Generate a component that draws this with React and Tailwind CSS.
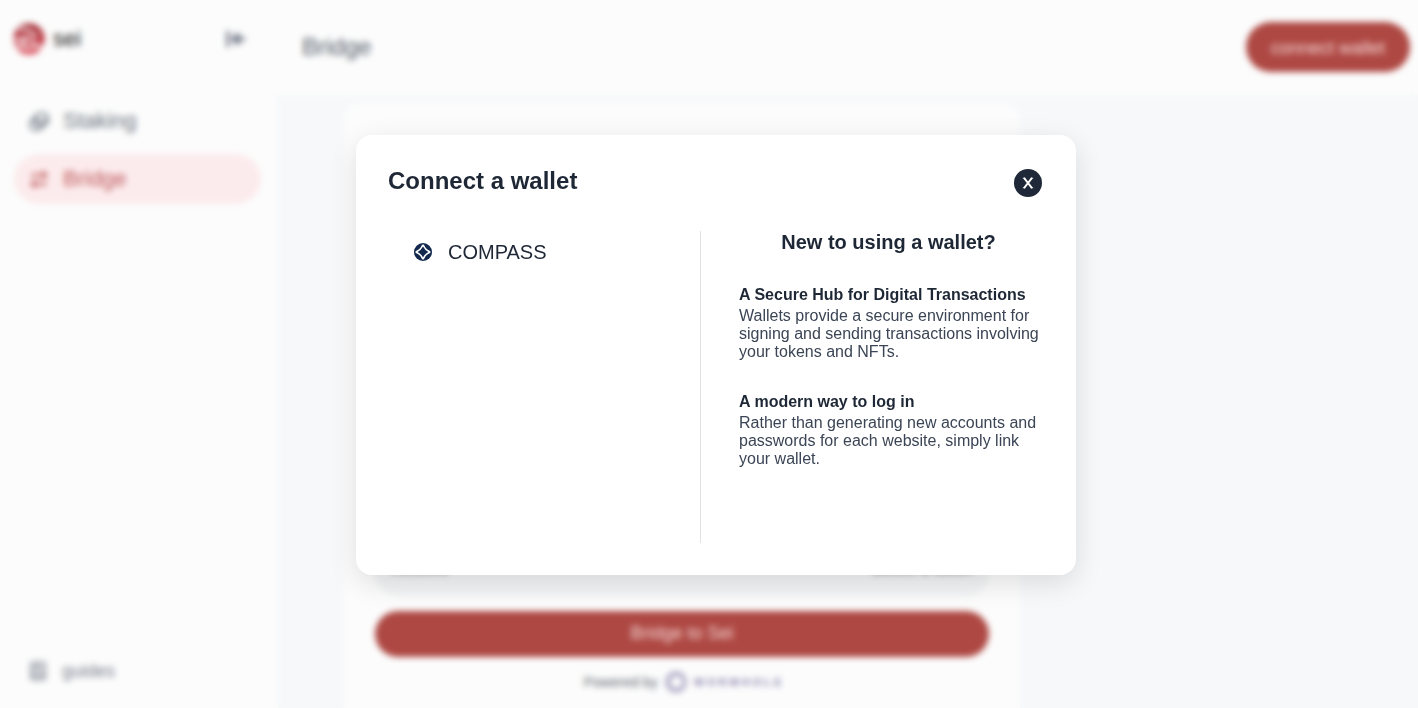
import { BookText } from "lucide-react";

function SeiLogo() {
  return (
    <svg viewBox="0 0 32 32" className="size-8" aria-hidden="true">
      <defs>
        <linearGradient id="sei" x1="0" y1="0" x2="0" y2="1">
          <stop offset="0" stopColor="#9a2027" />
          <stop offset="1" stopColor="#dc4654" />
        </linearGradient>
        <clipPath id="disc">
          <circle cx="16" cy="16" r="15.500" />
        </clipPath>
      </defs>
      <circle cx="16" cy="16" r="15.500" fill="url(#sei)" />
      <g clipPath="url(#disc)" fill="none" stroke="#fcfcfc" strokeWidth="2.8">
        <path d="M6 8c4-3 8-2 11 0s4 4 8 5" />
        <path d="M-1 16c5 2 8 0 11-1s6 0 8 2 3 2 5 2" />
        <path d="M-1 24c3 0 5-1 8-1s4 2 8 2 6-2 9-2 5 1 9 1M11 16v6" />
      </g>
    </svg>
  );
}

function StakingIcon() {
  return (
    <svg viewBox="0 0 24 24" className="size-6" fill="none" stroke="currentColor" strokeWidth="2.2" aria-hidden="true">
      <ellipse cx="14.5" cy="8.5" rx="6" ry="4.5" />
      <path d="M8.500 9v4c0 2.500 3 4 6 4s6-2.500 6-4.500V9" />
      <path d="M8 9c-3 1-4.500 3-4.500 5v2.500c0 3 3 4.500 6 4.500 3 0 5-1.500 6-3.500" />
    </svg>
  );
}

function TransferIcon() {
  return (
    <svg viewBox="0 0 24 24" className="size-6" fill="none" stroke="currentColor" strokeWidth="2.4" aria-hidden="true">
      <path d="M4 8h14M20 17H6" />
      <path d="M15.500 3 21 8l-5.500 5zM8.500 12 3 17l5.500 5z" fill="currentColor" stroke="none" />
    </svg>
  );
}

function CollapseIcon() {
  return (
    <svg viewBox="0 0 20 20" className="size-5" fill="none" stroke="currentColor" strokeWidth="2.8" aria-hidden="true">
      <path d="M2 2v16M19 10H8M13 4.500 7.500 10l5.500 5.500" />
    </svg>
  );
}

function WormholeLogo() {
  return (
    <span className="flex items-center gap-2 text-[#8a84ae]">
      <svg viewBox="0 0 20 20" className="size-5" fill="none" stroke="currentColor" aria-hidden="true">
        <circle cx="10" cy="10" r="9" strokeWidth="2.4" />
        <circle cx="11" cy="10" r="7" strokeWidth="1" />
      </svg>
      <span className="text-[11px] leading-5 font-bold tracking-[3px]">WORMHOLE</span>
    </span>
  );
}

function Sidebar() {
  return (
    <aside className="flex w-[278px] shrink-0 flex-col bg-[#fcfcfc] px-3.5 pt-[23px] pb-6">
      <div className="-ml-px flex items-center justify-between pr-[18px]">
        <a href="#home" className="flex items-center gap-2 text-[22px] leading-8 font-medium text-[#222222]">
          <SeiLogo />
          sei
        </a>
        <button type="button" aria-label="Collapse sidebar" className="text-[#586072]">
          <CollapseIcon />
        </button>
      </div>
      <nav className="mt-[41px] flex flex-1 flex-col gap-2 text-[22px] leading-[50px]">
        <a href="#staking" className="flex items-center gap-3 rounded-full px-[13px] text-[#6c7581]">
          <StakingIcon />
          Staking
        </a>
        <a href="#bridge" aria-current="page" className="mr-[3px] flex items-center gap-3 rounded-full bg-[#fcebed] px-[13px] text-[#c26060]">
          <TransferIcon />
          Bridge
        </a>
        <a href="#guides" className="mt-auto -mb-3 flex items-center gap-3 px-3 text-lg leading-[50px] text-[#7d8390]">
          <BookText className="size-6 p-0.5" strokeWidth={2.4} />
          guides
        </a>
      </nav>
    </aside>
  );
}

function BridgePage() {
  return (
    <div className="flex min-w-0 flex-1 flex-col">
      <header className="flex h-[95px] shrink-0 items-center justify-between bg-[#fcfcfc] pr-2 pb-0.5 pl-6">
        <h1 className="text-2xl text-[#565f6b]">Bridge</h1>
        <button type="button" className="h-[50px] rounded-full bg-[#ae4843] px-[25px] pt-0.5 text-lg text-[#f3d5d3]">
          connect wallet
        </button>
      </header>
      <main className="flex flex-1 flex-col bg-[#f6f8fa] px-[66px] pt-2">
        <section className="flex w-[676px] max-w-full flex-1 flex-col justify-end rounded-t-2xl bg-[#fcfcfc] px-[31px] pb-4">
          <div className="flex h-12 items-center justify-between rounded-b-3xl bg-[#f3f4f5] px-4 pb-2 text-base text-[#59616b]">
            <span>Receive</span>
            <span>Select a token</span>
          </div>
          <button type="button" className="mt-3.5 h-[46px] rounded-full bg-[#ae4843] pb-0.5 text-lg text-[#f3d5d3]">
            Bridge to Sei
          </button>
          <div className="mt-3.5 flex items-center justify-center gap-2 pt-px pl-1 text-sm text-[#5d646e]">
            Powered by
            <WormholeLogo />
          </div>
        </section>
      </main>
    </div>
  );
}

function CompassIcon() {
  return (
    <svg viewBox="0 0 18 18" className="size-[18px]" aria-hidden="true">
      <circle cx="9" cy="9" r="9" fill="#12294d" />
      <path d="M9 2.800Q10.600 7.400 15.200 9 10.600 10.600 9 15.200 7.400 10.600 2.800 9 7.400 7.400 9 2.800z" fill="#12294d" stroke="#fff" strokeWidth="2.600" strokeLinejoin="round" />
      <path d="M9 3.600Q10.800 7.200 14.400 9 10.800 10.800 9 14.400 7.200 10.800 3.600 9 7.200 7.200 9 3.600z" fill="#12294d" />
    </svg>
  );
}

function Tip({ title, children }) {
  return (
    <section className="text-base leading-[18px]">
      <h4 className="mb-[3px] font-bold text-[#1e2735]">{title}</h4>
      <p className="text-[#3b4555]">{children}</p>
    </section>
  );
}

function WalletDialog() {
  return (
    <div role="dialog" aria-modal="true" aria-labelledby="wallet-title" className="flex min-h-[440px] w-[720px] max-w-full flex-col rounded-2xl bg-white p-8 shadow-[0_8px_28px_rgba(0,0,0,0.12)]">
      <div className="flex items-start justify-between">
        <h2 id="wallet-title" className="text-2xl leading-7 font-bold text-[#1e2735]">Connect a wallet</h2>
        <button type="button" aria-label="Close" className="mt-0.5 mr-0.5 flex size-7 items-center justify-center rounded-full bg-[#1f2838] text-white">
          <svg viewBox="0 0 12 12" className="size-3" fill="none" stroke="currentColor" aria-hidden="true">
            <path d="M2 0.800l8 10.400M10 0.800L2 11.200" strokeWidth="1.900" />
            <path d="M0.800 1.200h2.400M8.800 1.200h2.400M0.800 10.800h2.400M8.800 10.800h2.400" strokeWidth="0.800" />
          </svg>
        </button>
      </div>
      <div className="mt-[34px] flex flex-1">
        <div className="flex-1 pt-1.5">
          <button type="button" className="flex items-center gap-4 px-[26px] text-xl leading-[30px] text-[#1e2735]">
            <CompassIcon />
            COMPASS
          </button>
        </div>
        <div className="flex w-[344px] flex-col border-l border-[#e0e1e4] pl-[38px]">
          <h3 className="mb-[33px] pr-1.5 text-center text-xl leading-[22px] font-bold text-[#1e2735]">New to using a wallet?</h3>
          <div className="flex flex-col gap-8">
            <Tip title="A Secure Hub for Digital Transactions">
              Wallets provide a secure environment for signing and sending transactions involving your tokens and NFTs.
            </Tip>
            <Tip title="A modern way to log in">
              Rather than generating new accounts and passwords for each website, simply link your wallet.
            </Tip>
          </div>
        </div>
      </div>
    </div>
  );
}

export default function App() {
  return (
    <div className="relative font-['Liberation_Sans',Arial,sans-serif]">
      <div className="flex h-screen overflow-hidden">
        <Sidebar />
        <BridgePage />
      </div>
      <div className="fixed inset-0 flex items-center justify-center pt-0.5 pl-3.5 backdrop-blur-[3px]">
        <WalletDialog />
      </div>
    </div>
  );
}
